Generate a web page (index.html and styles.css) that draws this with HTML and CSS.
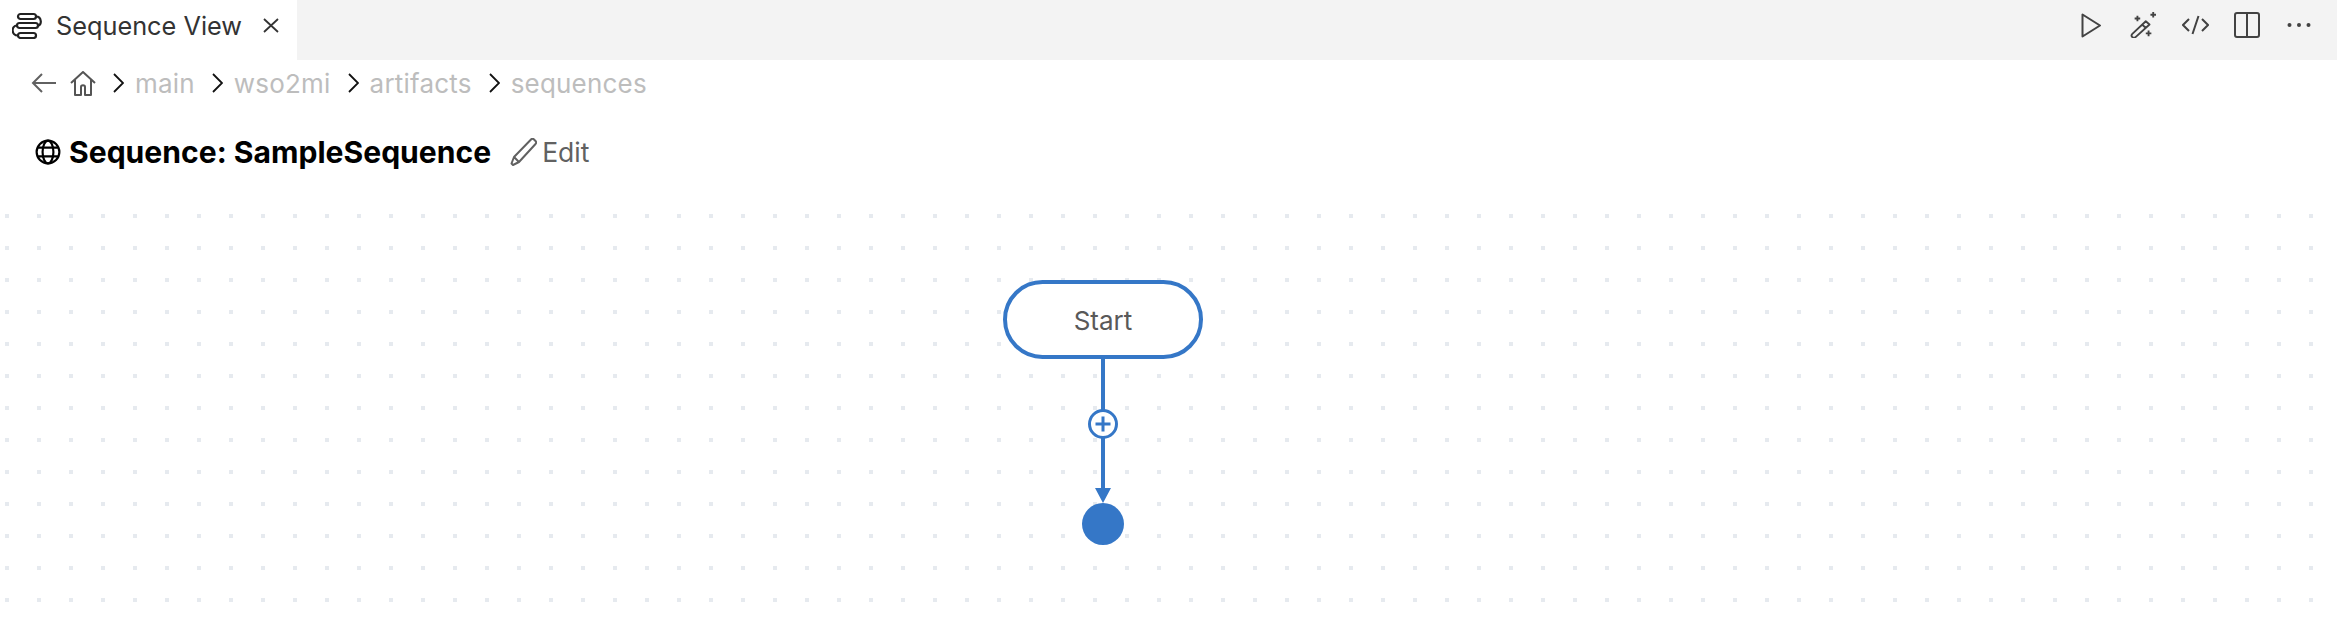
FILE: index.html
```html
<!DOCTYPE html>
<html lang="en">
<head>
<meta charset="utf-8">
<title>Sequence View</title>
<link rel="stylesheet" href="styles.css">
</head>
<body>
<div class="tabbar">
  <div class="tab">
    <svg class="tab-icon" width="30" height="27" viewBox="0 0 30 27" fill="none" stroke="#222" stroke-width="2.200"><rect x="6" y="2" width="18" height="5" rx="2.500"/><rect x="5" y="11" width="21" height="5" rx="2.500"/><rect x="6" y="21" width="18" height="5" rx="2.500"/><path d="M24 4.500c6 0 6 9 2 9M5 13.500c-6 0-6 10 1 10"/></svg>
    <span class="tab-title">Sequence View</span>
    <svg class="tab-close" width="16" height="15" viewBox="0 0 16 15" fill="none" stroke="#333" stroke-width="1.800"><path d="M1 1l14 13M15 1L1 14"/></svg>
  </div>
  <div class="actions">
    <span class="action"><svg width="20" height="25" viewBox="0 0 20 25" fill="none" stroke="#424242" stroke-width="2" stroke-linejoin="round"><path d="M1.500 1.500v22L19 12.500z"/></svg></span>
    <span class="action"><svg width="28" height="26" viewBox="0 0 30 28" fill="none" stroke="#424242" stroke-width="2"><path d="M18 10l4 3.500L7 27c-1 1-2.500 1-3.500 0s-1-2.500 0-3.500zM14.500 14l4 3.500" stroke-linejoin="round"/><path d="M9 4v6M6 7h6M26 0v6M23 3h6M21 20v6M18 23h6"/></svg></span>
    <span class="action"><svg width="27" height="20" viewBox="0 0 27 20" fill="none" stroke="#424242" stroke-width="2"><path d="M7 4l-6 6 6 6M20 4l6 6-6 6M16.500 1l-6 18"/></svg></span>
    <span class="action"><svg width="26" height="26" viewBox="0 0 26 26" fill="none" stroke="#424242" stroke-width="2"><rect x="1" y="1" width="24" height="24" rx="2"/><path d="M13 1v24"/></svg></span>
    <span class="action"><svg width="24" height="6" viewBox="0 0 24 6" fill="#424242"><circle cx="2.500" cy="3" r="2"/><circle cx="12" cy="3" r="2"/><circle cx="21.500" cy="3" r="2"/></svg></span>
  </div>
</div>
<nav class="crumbs">
  <svg class="back" width="25" height="22" viewBox="0 0 25 22" fill="none" stroke="#616161" stroke-width="2"><path d="M25 11H2M11 2l-9 9 9 9"/></svg>
  <svg class="home" width="26" height="25" viewBox="0 0 26 25" fill="none" stroke="#555" stroke-width="2" stroke-linejoin="round"><path d="M1 12L13 1l12 11M5 9v15h6v-8c0-2.500 4-2.500 4 0v8h6V9"/></svg>
  <svg class="chev" width="11" height="20" viewBox="0 0 11 20" fill="none" stroke="#111" stroke-width="1.800"><path d="M1 1l9 9-9 9"/></svg>
  <span class="crumb">main</span>
  <svg class="chev" width="11" height="20" viewBox="0 0 11 20" fill="none" stroke="#111" stroke-width="1.800"><path d="M1 1l9 9-9 9"/></svg>
  <span class="crumb">wso2mi</span>
  <svg class="chev" width="11" height="20" viewBox="0 0 11 20" fill="none" stroke="#111" stroke-width="1.800"><path d="M1 1l9 9-9 9"/></svg>
  <span class="crumb">artifacts</span>
  <svg class="chev" width="11" height="20" viewBox="0 0 11 20" fill="none" stroke="#111" stroke-width="1.800"><path d="M1 1l9 9-9 9"/></svg>
  <span class="crumb">sequences</span>
</nav>
<header class="heading">
  <svg width="26" height="26" viewBox="0 0 24 24" fill="none" stroke="#000" stroke-width="2"><circle cx="12" cy="12" r="10.500"/><ellipse cx="12" cy="12" rx="5" ry="10.500"/><path d="M2.500 8h19M2.500 16h19"/></svg>
  <h1 class="title">Sequence: SampleSequence</h1>
  <svg class="pencil" width="27" height="28" viewBox="0 0 27 28" fill="none" stroke="#616161" stroke-width="2" stroke-linejoin="round"><path d="M21 1.500c1-1 2-1 3 0l1.500 1.500c1 1 1 2 0 3L9 24l-6 3-1.500-1.500L4 19zM4 19l5 5"/></svg>
  <span class="edit">Edit</span>
</header>
<main class="canvas">
  <svg class="diagram" width="2337" height="425" viewBox="0 192 2337 425">
    <defs><pattern id="dots" x="5" y="22" width="32" height="32" patternUnits="userSpaceOnUse"><rect width="4" height="4" fill="#e6eaef"/></pattern></defs>
    <rect x="0" y="192" width="2337" height="425" fill="url(#dots)"/>
    <rect x="1005" y="282" width="196" height="75" rx="37.500" fill="#fff" stroke="#3577c7" stroke-width="4"/>
    <text x="1103" y="330" class="node-label" text-anchor="middle">Start</text>
    <path d="M1103 359v130" stroke="#3577c7" stroke-width="4" fill="none"/>
    <circle cx="1103" cy="424" r="13.500" fill="#fff" stroke="#3577c7" stroke-width="3"/>
    <path d="M1095.500 424h15M1103 416.500v15" stroke="#3577c7" stroke-width="3" fill="none"/>
    <path d="M1095 488h16l-8 15z" fill="#3577c7"/>
    <circle cx="1103" cy="524" r="21" fill="#3577c7"/>
  </svg>
</main>
</body>
</html>
```
FILE: styles.css
```css
html, body { margin: 0; padding: 0; }
body { width: 2337px; height: 617px; overflow: hidden; background: #fff; font-family: Inter, "Liberation Sans", sans-serif; }
svg { display: block; flex: none; }
.tabbar { display: flex; justify-content: space-between; align-items: flex-start; height: 60px; background: #f3f3f3; }
.tab { display: flex; align-items: center; width: 297px; height: 60px; box-sizing: border-box; padding-left: 12px; padding-bottom: 10px; background: #fff; }
.tab-title { margin-left: 14px; font-size: 25.300px; color: #333; white-space: nowrap; }
.tab-close { margin-left: 21px; }
.actions { display: flex; padding-right: 12px; }
.action { display: flex; align-items: center; justify-content: center; width: 52px; height: 50px; }
.crumbs { display: flex; align-items: center; height: 46px; padding-left: 31px; }
.home { margin-left: 14px; }
.chev { margin-left: 17px; }
.crumb { margin-left: 11px; font-size: 26px; letter-spacing: 0.200px; color: #bdbdbd; white-space: nowrap; }
.heading { display: flex; align-items: center; height: 60px; padding-left: 35px; margin-top: 16px; }
.title { margin: 0 0 0 8px; font-size: 30.100px; font-weight: 700; color: #000; white-space: nowrap; }
.pencil { margin-left: 19px; }
.edit { margin-left: 5px; font-size: 26.500px; color: #616161; }
.canvas { height: 425px; margin-top: 10px; }
.node-label { font-size: 26px; fill: #595959; font-family: Inter, "Liberation Sans", sans-serif; }
```
